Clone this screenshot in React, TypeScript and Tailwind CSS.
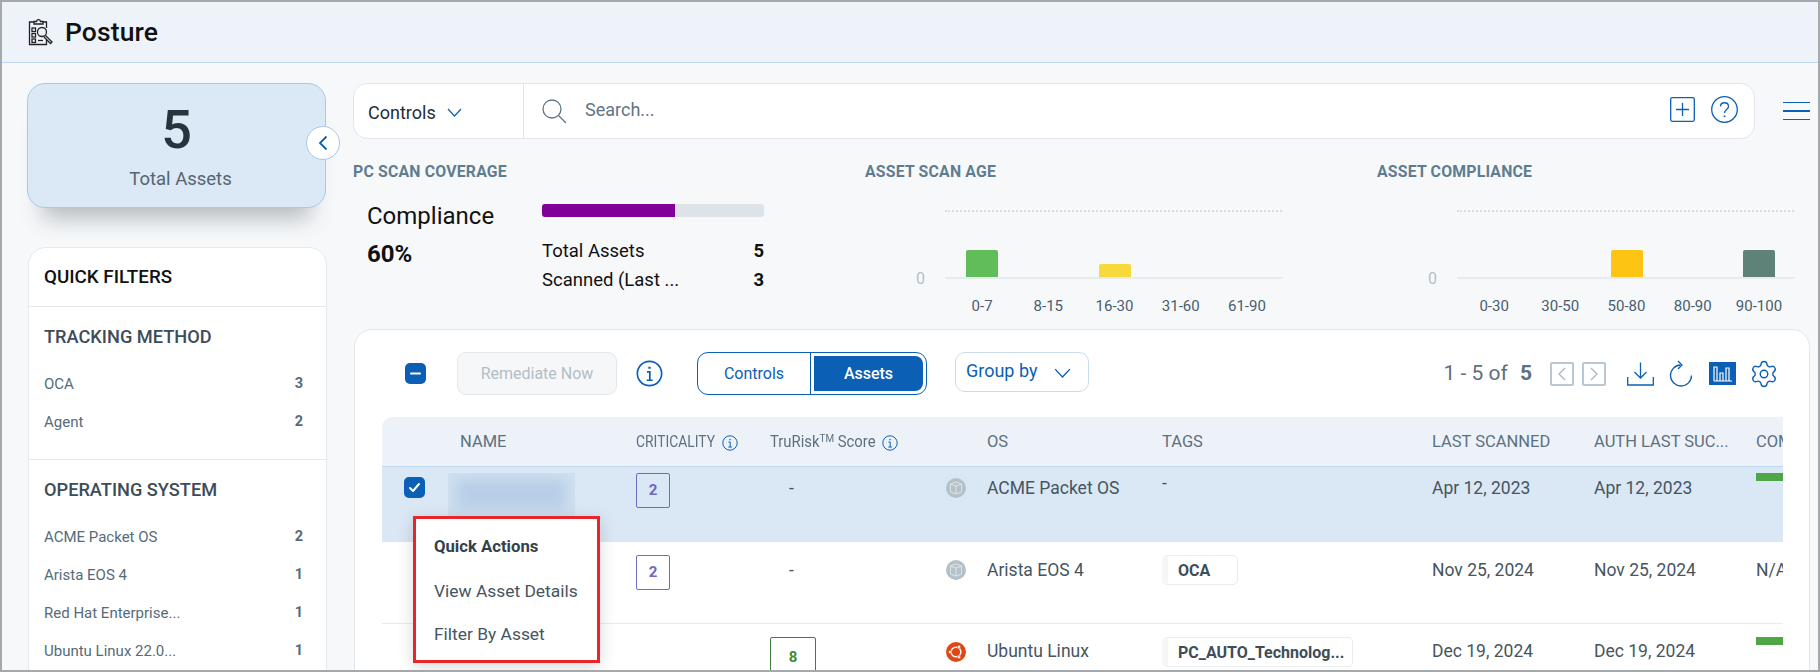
import { Settings } from "lucide-react";

const BLUE = "#0b5fb5";
const GRID = "grid grid-cols-[78px_176px_134px_176px_41px_175px_270px_162px_162px_27px]";

const tracking = [
  { name: "OCA", count: 3 },
  { name: "Agent", count: 2 },
];
const systems = [
  { name: "ACME Packet OS", count: 2 },
  { name: "Arista EOS 4", count: 1 },
  { name: "Red Hat Enterprise...", count: 1 },
  { name: "Ubuntu Linux 22.0...", count: 1 },
];

function PostureIcon() {
  return (
    <svg width="26" height="28" viewBox="0 0 26 28" fill="none" stroke="#222" strokeWidth="1.3">
      <path d="M6 4H1.5v22.5h17V22" />
      <path d="M15 4h3.5v6" />
      <path d="M6 6V3.5h2.5C9 1 12 1 12.5 3.500H15V6z" />
      <rect x="4" y="10" width="3.500" height="3.500" />
      <rect x="4" y="15.500" width="3.500" height="3.500" />
      <rect x="4" y="21" width="3.500" height="3.500" />
      <path d="M10 22.500h5" />
      <circle cx="14" cy="14" r="4.500" />
      <path d="M17.500 17.500l6.500 6.500-1.500 1.500-6.500-6.500" />
    </svg>
  );
}

function Chevron({ size = 15, color = BLUE }: { size?: number; color?: string }) {
  return (
    <svg width={size} height={size * 0.6} viewBox="0 0 15 9" fill="none" stroke={color} strokeWidth="1.200">
      <path d="M1 1l6.500 7L14 1" />
    </svg>
  );
}

function InfoIcon({ size = 16, sw = 1 }: { size?: number; sw?: number }) {
  return (
    <svg width={size} height={size} viewBox="0 0 16 16" fill="none" stroke={BLUE} strokeWidth={sw} className="shrink-0">
      <circle cx="8" cy="8" r="7.200" />
      <path d="M6.500 7h1.700v5M6.300 12h3.600" />
      <path d="M8 4v1.200" strokeWidth={sw * 1.400} />
    </svg>
  );
}

function CubeOs() {
  return (
    <svg width="20" height="20" viewBox="0 0 20 20" fill="none">
      <circle cx="10" cy="10" r="10" fill="#b4c1c8" />
      <path d="M4.500 6l5.500-2 5.500 2v8l-5.500 2-5.500-2zM4.500 6l5.500 2 5.500-2M10 8v8" stroke="#e2e8eb" strokeWidth="0.900" />
    </svg>
  );
}

function UbuntuOs() {
  return (
    <svg width="20" height="20" viewBox="0 0 20 20" fill="none">
      <circle cx="10" cy="10" r="10" fill="#dd4814" />
      <circle cx="10" cy="10" r="4.800" stroke="#fff" strokeWidth="1.500" />
      <circle cx="4" cy="10" r="1.600" fill="#fff" stroke="#dd4814" strokeWidth="0.600" />
      <circle cx="13" cy="4.800" r="1.600" fill="#fff" stroke="#dd4814" strokeWidth="0.600" />
      <circle cx="13" cy="15.200" r="1.600" fill="#fff" stroke="#dd4814" strokeWidth="0.600" />
    </svg>
  );
}

function CheckBox({ minus }: { minus?: boolean }) {
  return (
    <span className="w-[21px] h-[21px] rounded-[5px] bg-[#0b5fb5] flex items-center justify-center shrink-0">
      <svg width="13" height="13" viewBox="0 0 13 13" fill="none" stroke="#fff" strokeWidth="2" strokeLinecap="round" strokeLinejoin="round">
        {minus ? <path d="M2 6.500h9" /> : <path d="M2 7l3 3 6-7" />}
      </svg>
    </span>
  );
}

function Chart({ title, bars, labels }: { title: string; bars: { at: number; cls: string }[]; labels: string[] }) {
  return (
    <div>
      <h3 className="text-[15.800px] leading-[17px] font-bold text-[#5f7d90] tracking-[0.2px]">{title}</h3>
      <div className="flex mt-[30px]">
        <div className="w-[80px] pr-[20px] h-[69px] flex items-end justify-end text-[16px] leading-[18px] text-[#b4c0c8] translate-y-[9px]">0</div>
        <div className="w-[337px]">
          <div className="h-[69px] border-t-2 border-b-2 border-t-[#d9dee2] border-b-[#e8ebee] [border-top-style:dotted] flex pl-[4px] pr-[2px] items-end">
            {labels.map((l, i) => {
              const bar = bars.find((b) => b.at === i);
              return (
                <div key={l} className="flex-1 flex justify-center">
                  {bar && <div className={`w-[32px] rounded-t-[2px] ${bar.cls}`} />}
                </div>
              );
            })}
          </div>
          <div className="flex pl-[4px] pr-[2px] mt-[18px]">
            {labels.map((l) => (
              <span key={l} className="flex-1 text-center text-[15px] leading-[18px] text-[#4a5e6e]">{l}</span>
            ))}
          </div>
        </div>
      </div>
    </div>
  );
}

function FilterRow({ name, count }: { name: string; count: number }) {
  return (
    <div className="h-[38px] flex items-center justify-between pr-[7px] text-[15px] text-[#566b7a]">
      <span>{name}</span>
      <span className="font-bold text-[#566b7a] text-[14.500px]">{count}</span>
    </div>
  );
}

function ScoreBox({ value, cls }: { value: number; cls: string }) {
  return <div className={`flex items-center justify-center border rounded-[2px] font-bold text-[15px] ${cls}`}>{value}</div>;
}

function Tag({ text, cls }: { text: string; cls: string }) {
  return (
    <div className={`h-[30px] border border-[#e8ecef] rounded-[5px] border-l-[6px] border-l-[#f4f6f8] bg-white flex items-center pl-[10px] pt-[1px] text-[16px] font-bold text-[#3d4d59] ${cls}`}>
      {text}
    </div>
  );
}

export default function App() {
  return (
    <div className="w-[1820px] h-[672px] overflow-hidden border-2 border-[#a6a9ac] bg-[#f6f8fa] flex flex-col font-['Roboto',sans-serif]">
      <header className="h-[61px] shrink-0 bg-[#eef3fa] border-b border-[#bfd8f0] flex items-center pl-[26px]">
        <PostureIcon />
        <h1 className="ml-[11px] text-[26.500px] font-medium text-[#111] tracking-[0.1px]">Posture</h1>
      </header>

      <div className="flex flex-1 min-h-0">
        <aside className="w-[299px] ml-[25px] pt-[20px] shrink-0">
          <div className="relative h-[125px] rounded-[18px] bg-[#dbe8f5] border border-[#a9c7e6] shadow-[0_26px_22px_-16px_rgba(60,70,80,0.35)] flex flex-col items-center">
            <div className="text-[54px] leading-[60px] mt-[16px] font-medium text-[#27333d]">5</div>
            <div className="text-[18.500px] leading-[22px] mt-[8px] text-[#55646f] ml-[8px]">Total Assets</div>
            <button className="absolute right-[-15px] top-[42px] w-[34px] h-[34px] rounded-full bg-white border border-[#a9c7e6] flex items-center justify-center">
              <svg width="10" height="16" viewBox="0 0 10 16" fill="none" stroke={BLUE} strokeWidth="1.800"><path d="M8.500 1.500L2 8l6.500 6.500" /></svg>
            </button>
          </div>

          <div className="mt-[39px] ml-[1px] -mr-[1px] rounded-t-[18px] bg-white border border-[#e5e9ec]">
            <div className="h-[59px] border-b border-[#e5e9ec] flex items-center pl-[15px] pt-[1px] text-[18.800px] font-medium text-[#111]">QUICK FILTERS</div>
            <section className="pl-[15px] pr-[16px] pt-[18px] pb-[18px] border-b border-[#e5e9ec]">
              <h4 className="text-[18.200px] leading-[24px] font-medium text-[#3c4c58] mb-[16px]">TRACKING METHOD</h4>
              {tracking.map((t) => <FilterRow key={t.name} {...t} />)}
            </section>
            <section className="pl-[15px] pr-[16px] pt-[18px]">
              <h4 className="text-[18.200px] leading-[24px] font-medium text-[#3c4c58] mb-[16px]">OPERATING SYSTEM</h4>
              {systems.map((t) => <FilterRow key={t.name} {...t} />)}
            </section>
          </div>
        </aside>

        <main className="ml-[27px] flex-1 min-w-0 pt-[20px]">
          <div className="flex items-center">
            <div className="w-[1402px] h-[56px] bg-white border border-[#e2e6ea] rounded-[14px] flex items-center">
              <div className="w-[170px] h-full border-r border-[#e2e6ea] flex items-center pl-[14px] pt-[2px] gap-[11px]">
                <span className="text-[18px] text-[#1f2d38]">Controls</span>
                <Chevron />
              </div>
              <svg className="ml-[18px]" width="25" height="25" viewBox="0 0 25 25" fill="none" stroke="#5f7585" strokeWidth="1.300">
                <circle cx="10" cy="10" r="9" />
                <path d="M16.500 16.500l7.500 7.500" />
              </svg>
              <span className="ml-[18px] text-[18px] text-[#5f7585] -mt-[4px]">Search...</span>
              <div className="ml-auto flex items-center pr-[16px] gap-[16px] -mt-[4px]">
                <svg width="25" height="25" viewBox="0 0 25 25" fill="none" stroke={BLUE} strokeWidth="1.300">
                  <rect x="0.700" y="0.700" width="23.600" height="23.600" rx="1.500" />
                  <path d="M12.500 6v13M6 12.500h13" />
                </svg>
                <svg width="27" height="27" viewBox="0 0 27 27" fill="none" stroke={BLUE} strokeWidth="1.300">
                  <circle cx="13.500" cy="13.500" r="12.800" />
                  <path d="M9.500 10.500c0-5 8-5 8 0 0 3-4 3-4 6.500" />
                  <path d="M13.500 19.500v1.500" strokeWidth="1.800" />
                </svg>
              </div>
            </div>
            <div className="ml-[28px] w-[27px] flex flex-col gap-[7px]">
              <span className="h-[1.500px] bg-[#0b5fb5]" />
              <span className="h-[1.500px] bg-[#0b5fb5]" />
              <span className="h-[1.500px] bg-[#0b5fb5]" />
            </div>
          </div>

          <div className="grid grid-cols-[512px_512px_512px] mt-[24px] h-[166px]">
            <div>
              <h3 className="text-[15.800px] leading-[17px] font-bold text-[#5f7d90] tracking-[0.2px]">PC SCAN COVERAGE</h3>
              <div className="flex">
                <div className="w-[189px] pl-[14px] pt-[22px]">
                  <div className="text-[24px] leading-[28px] text-[#111]">Compliance</div>
                  <div className="text-[24px] leading-[28px] font-bold text-[#111] mt-[10px]">60%</div>
                </div>
                <div className="w-[222px] pt-[24px]">
                  <div className="h-[13px] rounded-[3px] bg-[#dde3e7] overflow-hidden">
                    <div className="h-full w-[60%] bg-[#800099]" />
                  </div>
                  <div className="mt-[20px] flex justify-between text-[18.500px] leading-[29px] text-[#111]">
                    <span>Total Assets</span><b className="font-bold">5</b>
                  </div>
                  <div className="flex justify-between text-[18.500px] leading-[29px] text-[#111]">
                    <span>Scanned (Last ...</span><b className="font-bold">3</b>
                  </div>
                </div>
              </div>
            </div>
            <Chart
              title="ASSET SCAN AGE"
              labels={["0-7", "8-15", "16-30", "31-60", "61-90"]}
              bars={[
                { at: 0, cls: "h-[27px] bg-[#60bd5a]" },
                { at: 2, cls: "h-[13px] bg-[#f8d93c]" },
              ]}
            />
            <Chart
              title="ASSET COMPLIANCE"
              labels={["0-30", "30-50", "50-80", "80-90", "90-100"]}
              bars={[
                { at: 2, cls: "h-[27px] bg-[#fdc413]" },
                { at: 4, cls: "h-[27px] bg-[#5f8278]" },
              ]}
            />
          </div>

          <div className="w-[1456px] ml-[1px] h-[400px] rounded-t-[18px] bg-white border border-[#e3e7ea] pt-[22px]">
            <div className="flex items-start pl-[50px] pr-[30px] h-[43px]">
              <div className="h-[43px] flex items-center"><CheckBox minus /></div>
              <button className="ml-[31px] w-[160px] h-[43px] pt-[1px] rounded-[9px] bg-[#f5f7f9] border border-[#e3e8ec] text-[16px] text-[#b2bec6]">Remediate Now</button>
              <div className="ml-[19px] h-[43px] flex items-center"><InfoIcon size={27} /></div>
              <div className="ml-[34px] w-[230px] h-[43px] rounded-[11px] border-[1.500px] border-[#0b5fb5] flex overflow-hidden">
                <div className="w-[113px] pt-[1px] border-r border-[#0b5fb5] flex items-center justify-center text-[16px] text-[#0b5fb5]">Controls</div>
                <div className="flex-1 p-[3px] flex">
                  <div className="flex-1 pt-[1px] bg-[#0b5fb5] rounded-r-[8px] flex items-center justify-center text-[16px] font-medium text-white">Assets</div>
                </div>
              </div>
              <div className="ml-[28px] w-[134px] h-[40px] rounded-[10px] border border-[#c9dcef] flex items-center pl-[10px] pb-[3px] text-[18px] text-[#0b5fb5]">
                Group by
                <span className="ml-[17px] mt-[5px]"><Chevron size={17} /></span>
              </div>

              <div className="ml-auto flex items-center h-[43px]">
                <span className="text-[21px] text-[#5d7080]">1 - 5 of <b className="font-bold ml-[7px]">5</b></span>
                <span className="ml-[18px] w-[24px] h-[24px] border-2 border-[#b9c7d2] rounded-[2px] flex items-center justify-center">
                  <svg width="8" height="14" viewBox="0 0 8 14" fill="none" stroke="#a5b4c0" strokeWidth="1.200"><path d="M7 1L1 7l6 6" /></svg>
                </span>
                <span className="ml-[8px] w-[24px] h-[24px] border-2 border-[#b9c7d2] rounded-[2px] flex items-center justify-center">
                  <svg width="8" height="14" viewBox="0 0 8 14" fill="none" stroke="#a5b4c0" strokeWidth="1.200"><path d="M1 1l6 6-6 6" /></svg>
                </span>
                <svg className="ml-[21px]" width="27" height="24" viewBox="0 0 27 24" fill="none" stroke={BLUE} strokeWidth="1.300">
                  <path d="M13.500 0.500v15M7.500 10l6 6 6-6" />
                  <path d="M0.700 15v8h25.600v-8" />
                </svg>
                <svg className="ml-[15px]" width="24" height="27" viewBox="0 0 24 27" fill="none" stroke={BLUE} strokeWidth="1.300">
                  <path d="M11.500 5A10.500 10.500 0 1 0 22.500 15.500" />
                  <path d="M9 1l4 4-4 4" />
                </svg>
                <svg className="ml-[16px]" width="27" height="23" viewBox="0 0 27 23" fill="none">
                  <rect width="27" height="23" fill={BLUE} />
                  <path d="M5 19V5h3v14M11 19v-8h3v8M17 19V6h3v13M5 19h18" stroke="#fff" strokeWidth="1.200" />
                </svg>
                <Settings className="ml-[13px]" size={30} color={BLUE} strokeWidth={1.100} />
              </div>
            </div>

            <div className="relative mt-[22px] ml-[27px] w-[1401px]">
              <div className="overflow-hidden">
                <div className={`${GRID} h-[50px] pt-[2px] bg-[#edf2f9] border-b border-[#bfd8f0] rounded-tl-[10px] items-center text-[16.500px] text-[#5d7080]`}>
                  <span />
                  <span>NAME</span>
                  <span className="flex items-center gap-[7px]">
                    <span className="w-[79px] whitespace-nowrap origin-left scale-x-[0.84]">CRITICALITY</span>
                    <InfoIcon />
                  </span>
                  <span className="flex items-center gap-[7px]">
                    <span className="w-[105px] whitespace-nowrap origin-left scale-x-[0.9]">TruRisk<sup className="text-[11px]">TM</sup> Score</span>
                    <InfoIcon />
                  </span>
                  <span />
                  <span>OS</span>
                  <span>TAGS</span>
                  <span>LAST SCANNED</span>
                  <span>AUTH LAST SUC...</span>
                  <span className="overflow-hidden whitespace-nowrap">COMPLIANCE</span>
                </div>

                <div className={`${GRID} h-[75px] bg-[#dae7f4] border-b border-[#d9e6f2] text-[17.500px] text-[#46555f]`}>
                  <div className="pl-[22px] pt-[10px]"><CheckBox /></div>
                  <div className="-ml-[12px] mt-[6px] w-[127px] h-[48px] bg-[#d0e0f0] overflow-hidden">
                    <div className="w-[110px] h-[30px] ml-[8px] mt-[6px] bg-[#b8cfe7] blur-[6px]" />
                  </div>
                  <div className="pt-[6px]"><ScoreBox value={2} cls="w-[34px] h-[35px] border-[#6a6fc0] text-[#6a6abf]" /></div>
                  <div className="pl-[19px] pt-[8px]">-</div>
                  <div className="pt-[11px]"><CubeOs /></div>
                  <div className="pt-[8px]">ACME Packet OS</div>
                  <div className="pt-[3px]">-</div>
                  <div className="pt-[8px]">Apr 12, 2023</div>
                  <div className="pt-[8px]">Apr 12, 2023</div>
                  <div className="pt-[6px]"><div className="h-[8px] bg-[#4ea646]" /></div>
                </div>

                <div className={`${GRID} h-[82px] border-b border-[#e8ebee] text-[17.500px] text-[#46555f]`}>
                  <span />
                  <span />
                  <div className="pt-[13px]"><ScoreBox value={2} cls="w-[34px] h-[35px] border-[#6a6fc0] text-[#6a6abf]" /></div>
                  <div className="pl-[19px] pt-[15px]">-</div>
                  <div className="pt-[18px]"><CubeOs /></div>
                  <div className="pt-[15px]">Arista EOS 4</div>
                  <div className="pt-[13px]"><Tag text="OCA" cls="w-[76px]" /></div>
                  <div className="pt-[15px]">Nov 25, 2024</div>
                  <div className="pt-[15px]">Nov 25, 2024</div>
                  <div className="pt-[15px] overflow-hidden whitespace-nowrap">N/A</div>
                </div>

                <div className={`${GRID} h-[60px] text-[17.500px] text-[#46555f]`}>
                  <span />
                  <span />
                  <span />
                  <div className="pt-[13px]"><ScoreBox value={8} cls="w-[46px] h-[40px] border-[#3f7f3a] text-[#3f8a35]" /></div>
                  <div className="pt-[18px]"><UbuntuOs /></div>
                  <div className="pt-[14px]">Ubuntu Linux</div>
                  <div className="pt-[13px]"><Tag text="PC_AUTO_Technolog..." cls="w-[191px]" /></div>
                  <div className="pt-[14px]">Dec 19, 2024</div>
                  <div className="pt-[14px]">Dec 19, 2024</div>
                  <div className="pt-[13px]"><div className="h-[8px] bg-[#4ea646]" /></div>
                </div>
              </div>

              <div className="absolute left-[31px] top-[99px] w-[187px] h-[147px] bg-white border-[3px] border-[#e8262a] shadow-[0_4px_16px_rgba(0,0,0,0.15)] pl-[18px] text-[17.400px] text-[#46555f]">
                <div className="h-[20px] mt-[18px] leading-[20px] font-bold text-[#33414c] text-[16.700px]">Quick Actions</div>
                <div className="mt-[24px] leading-[20px]">View Asset Details</div>
                <div className="mt-[23px] leading-[20px]">Filter By Asset</div>
              </div>
            </div>
          </div>
        </main>
      </div>
    </div>
  );
}
